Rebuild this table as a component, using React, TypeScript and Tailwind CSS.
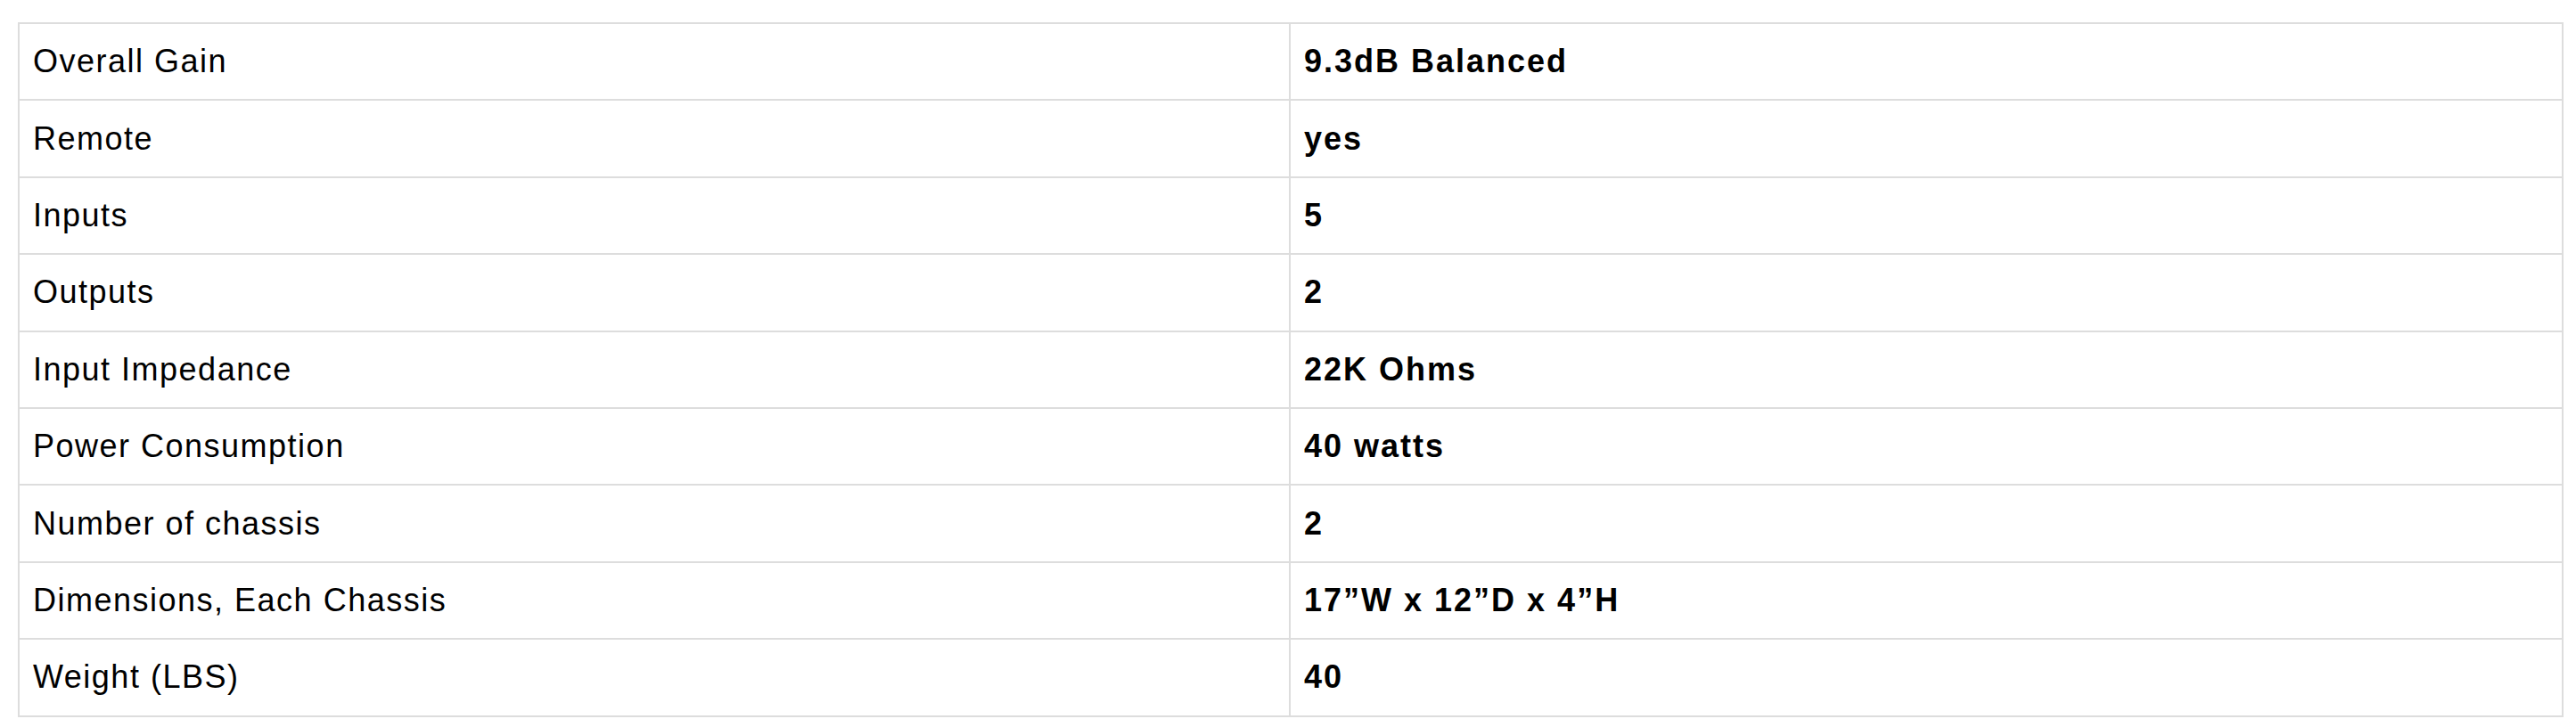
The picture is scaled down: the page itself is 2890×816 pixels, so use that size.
import React from "react";

const rows: [string, string][] = [
  ["Overall Gain", "9.3dB Balanced"],
  ["Remote", "yes"],
  ["Inputs", "5"],
  ["Outputs", "2"],
  ["Input Impedance", "22K Ohms"],
  ["Power Consumption", "40 watts"],
  ["Number of chassis", "2"],
  ["Dimensions, Each Chassis", "17\u201dW x 12\u201dD x 4\u201dH"],
  ["Weight (LBS)", "40"],
];

export default function App() {
  return (
    <div className="w-[2890px] h-[816px] bg-white pt-[25px] pl-[20px] font-['Liberation_Sans',Arial,sans-serif] text-black">
      <div className="w-[2856px] border-2 border-[#dddddd]">
        {rows.map(([label, value], i) => (
          <div
            key={label}
            className={
              i > 0
                ? "grid grid-cols-2 h-[86.4px] border-t-2 border-[#dddddd]"
                : "grid grid-cols-2 h-[84.4px]"
            }
          >
            <div className="flex items-center px-[15px] border-r-2 border-[#dddddd] text-[36px] tracking-[1.5px]">
              {label}
            </div>
            <div className="flex items-center px-[15px] text-[36px] font-bold tracking-[2px]">
              {value}
            </div>
          </div>
        ))}
      </div>
    </div>
  );
}
